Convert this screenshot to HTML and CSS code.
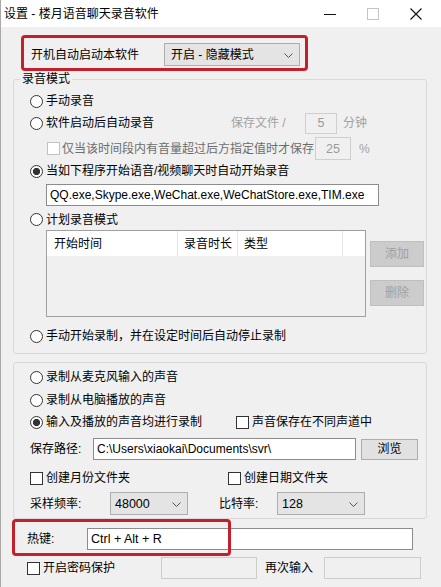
FILE: index.html
```html
<!DOCTYPE html>
<html lang="zh-CN">
<head>
<meta charset="utf-8">
<title>设置 - 楼月语音聊天录音软件</title>
<link rel="stylesheet" href="styles.css">
</head>
<body>
<div class="window">
  <div class="titlebar">
    <span class="title">设置 - 楼月语音聊天录音软件</span>
    <div class="caption">
      <span class="cap"><svg width="12" height="12" viewBox="0 0 12 12"><line x1="0" y1="6.5" x2="12" y2="6.5" stroke="#111" stroke-width="1"/></svg></span>
      <span class="cap"><svg width="12" height="12" viewBox="0 0 12 12"><rect x="0.5" y="0.5" width="11" height="11" fill="none" stroke="#c4c4c4" stroke-width="1"/></svg></span>
      <span class="cap"><svg width="12" height="12" viewBox="0 0 12 12"><path d="M0.5 0.5 L11.5 11.5 M11.5 0.5 L0.5 11.5" stroke="#111" stroke-width="1.1" fill="none"/></svg></span>
    </div>
  </div>

  <div class="content">
    <div class="startup-row">
      <span class="startup-label">开机自动启动本软件</span>
      <div class="combo combo-startup">
        <span>开启 - 隐藏模式</span>
        <svg class="chev" width="9" height="5" viewBox="0 0 9 5"><polyline points="0.5,0.5 4.5,4.5 8.5,0.5" fill="none" stroke="#555" stroke-width="1"/></svg>
      </div>
      <div class="mark mark-startup"></div>
    </div>

    <fieldset class="group group-mode">
      <legend>录音模式</legend>
      <div class="row r-h22 mt3"><span class="radio"></span><span>手动录音</span></div>
      <div class="row r-h22">
        <span class="radio"></span><span class="w185">软件启动后自动录音</span>
        <span class="dis w74">保存文件 /</span>
        <span class="spin spin-5">5</span>
        <span class="dis ml6">分钟</span>
      </div>
      <div class="row r-h23 mt3 indent-chk">
        <span class="chk chk-dis"></span><span class="semi">仅当该时间段内有音量超过后方指定值时才保存</span>
        <span class="spin spin-25">25</span>
        <span class="dis ml8">%</span>
      </div>
      <div class="row r-h22"><span class="radio on"></span><span>当如下程序开始语音/视频聊天时自动开始录音</span></div>
      <div class="field field-apps">QQ.exe,Skype.exe,WeChat.exe,WeChatStore.exe,TIM.exe</div>
      <div class="row r-h21 mt3"><span class="radio"></span><span>计划录音模式</span></div>
      <div class="plan">
        <div class="list">
          <div class="list-head">
            <span class="col col1">开始时间</span>
            <span class="col col2">录音时长</span>
            <span class="col col3">类型</span>
            <span class="col col4"></span>
          </div>
        </div>
        <div class="plan-buttons">
          <span class="btn btn-dis btn-add">添加</span>
          <span class="btn btn-dis btn-del">删除</span>
        </div>
      </div>
      <div class="row r-h22 mt8 mb6"><span class="radio"></span><span>手动开始录制，并在设定时间后自动停止录制</span></div>
    </fieldset>

    <fieldset class="group group-src">
      <div class="row r-h22 mt3"><span class="radio"></span><span>录制从麦克风输入的声音</span></div>
      <div class="row r-h22 mt1"><span class="radio"></span><span>录制从电脑播放的声音</span></div>
      <div class="row r-h22">
        <span class="radio on"></span><span class="w190">输入及播放的声音均进行录制</span>
        <span class="chk"></span><span>声音保存在不同声道中</span>
      </div>
      <div class="row r-h22 mt5">
        <span class="w63">保存路径:</span>
        <span class="field field-path">C:\Users\xiaokai\Documents\svr\</span>
        <span class="btn btn-browse">浏览</span>
      </div>
      <div class="row r-h22 mt7">
        <span class="chk"></span><span class="w182">创建月份文件夹</span>
        <span class="chk"></span><span>创建日期文件夹</span>
      </div>
      <div class="row r-h23 mt3 mb3">
        <span class="w80">采样频率:</span>
        <div class="combo combo-rate"><span>48000</span><svg class="chev" width="9" height="5" viewBox="0 0 9 5"><polyline points="0.5,0.5 4.5,4.5 8.5,0.5" fill="none" stroke="#555" stroke-width="1"/></svg></div>
        <span class="w58 ml31">比特率:</span>
        <div class="combo combo-bit"><span>128</span><svg class="chev" width="9" height="5" viewBox="0 0 9 5"><polyline points="0.5,0.5 4.5,4.5 8.5,0.5" fill="none" stroke="#555" stroke-width="1"/></svg></div>
      </div>
    </fieldset>

    <div class="row hotkey-row">
      <span class="w60">热键:</span>
      <span class="field field-hotkey">Ctrl + Alt + R</span>
      <div class="mark mark-hotkey"></div>
    </div>

    <div class="row pwd-row">
      <span class="chk"></span><span class="w118">开启密码保护</span>
      <span class="field field-dis field-pwd1"></span>
      <span class="w59 ml8">再次输入</span>
      <span class="field field-dis field-pwd2"></span>
    </div>
  </div>
</div>
</body>
</html>
```

FILE: styles.css
```css
* { box-sizing: border-box; }

html, body {
  margin: 0;
  padding: 0;
}

body {
  width: 441px;
  height: 587px;
  overflow: hidden;
  background: #f0f0f0;
  font-family: "Liberation Sans", "Noto Sans CJK SC", sans-serif;
  font-size: 12px;
  line-height: 16px;
  color: #000;
}

.window {
  width: 441px;
  height: 587px;
  border-left: 1px solid #a8a8a8;
  background: #f0f0f0;
}

/* title bar */
.titlebar {
  height: 27px;
  background: #fff;
  display: flex;
  align-items: center;
}
.title {
  padding-left: 3px;
  flex: 1;
  color: #000;
}
.caption {
  display: flex;
  margin-right: 4px;
}
.cap {
  width: 43px;
  height: 27px;
  display: flex;
  align-items: center;
  justify-content: center;
}

/* content */
.content {
  position: relative;
}

.startup-row {
  position: relative;
  display: flex;
  align-items: center;
  height: 23px;
  margin-top: 16px;
  padding-left: 30px;
}
.startup-label {
  width: 133px;
}

.combo {
  height: 23px;
  background: #e4e4e4;
  border: 1px solid #adadad;
  display: flex;
  align-items: center;
  justify-content: space-between;
  padding: 0 6px 0 6px;
}
.combo-startup { width: 136px; }
.combo-rate { width: 78px; padding-left: 4px; font-size: 12.5px; }
.combo-bit { width: 88px; padding-left: 4px; font-size: 12.5px; }
.chev { flex: none; margin-top: 1px; }

.mark {
  position: absolute;
  border: 3px solid #c3202b;
  border-radius: 4px;
  pointer-events: none;
}
.mark-startup {
  left: 20px;
  top: -8px;
  width: 287px;
  height: 36px;
}
.mark-hotkey {
  left: 11px;
  top: -9px;
  width: 219px;
  height: 37px;
}

/* groups */
.group {
  margin: 0 0 0 12px;
  width: 414px;
  padding: 0 0 0 16px;
  border: 1px solid #d9d9d9;
  border-radius: 3px;
  min-width: 0;
}
.group-mode { margin-top: 5px; }
.group-mode legend {
  margin-left: -10px;
  padding: 0 2px;
  line-height: 16px;
}
.group-src { margin-top: 8px; }

.row {
  display: flex;
  align-items: center;
  white-space: nowrap;
}
.r-h21 { height: 21px; }
.r-h22 { height: 22px; }
.r-h23 { height: 23px; }
.mt1 { margin-top: 1px; }
.mt3 { margin-top: 3px; }
.mt5 { margin-top: 5px; }
.mt7 { margin-top: 7px; }
.mt8 { margin-top: 8px; }
.mb3 { margin-bottom: 3px; }
.mb6 { margin-bottom: 6px; }
.ml6 { margin-left: 6px; }
.ml8 { margin-left: 8px; }
.ml31 { margin-left: 31px; }

.w58 { width: 58px; }
.w59 { width: 59px; }
.w60 { width: 60px; }
.w63 { width: 63px; }
.w74 { width: 74px; }
.w80 { width: 80px; }
.w118 { width: 118px; }
.w182 { width: 182px; }
.w185 { width: 185px; }
.w190 { width: 190px; }

.radio {
  flex: none;
  width: 13px;
  height: 13px;
  border: 1px solid #333;
  border-radius: 50%;
  background: #fff;
  margin-right: 3px;
}
.radio.on {
  background: radial-gradient(circle, #333 0 3.3px, #fff 3.9px);
}

.chk {
  flex: none;
  width: 13px;
  height: 13px;
  border: 1px solid #333;
  background: #fff;
  margin-right: 3px;
}
.chk-dis { border-color: #c2c2c2; background: #fff; margin-right: 2px; }
.indent-chk { padding-left: 17px; }

.dis { color: #a2a2a2; }
.semi { color: #6d6d6d; }

.spin {
  height: 22px;
  border: 1px solid #cfcfcf;
  background: #f0f0f0;
  color: #9a9a9a;
  display: flex;
  align-items: center;
  justify-content: center;
  font-size: 12.5px;
}
.spin-5 { width: 32px; height: 21px; }
.spin-25 { width: 36px; height: 23px; margin-left: 1px; }

.field {
  height: 22px;
  background: #fff;
  border: 1px solid #8c8c8c;
  display: flex;
  align-items: center;
  padding-left: 3px;
  white-space: nowrap;
  overflow: hidden;
  font-size: 12px;
}
.field-apps {
  margin: 2px 0 0 16px;
  width: 333px;
}
.field-path { width: 263px; }
.field-hotkey { width: 326px; font-size: 12.5px; }
.field-dis {
  background: #f0f0f0;
  border-color: #cccccc;
}
.field-pwd1 { width: 96px; }
.field-pwd2 { width: 97px; }

/* plan list */
.plan {
  display: flex;
  align-items: flex-start;
  padding-left: 16px;
}
.list {
  width: 320px;
  height: 87px;
  border: 1px solid #a0a0a0;
  background: #f0f0f0;
}
.list-head {
  display: flex;
  height: 25px;
  background: #fff;
}
.col {
  display: flex;
  align-items: center;
  border-right: 1px solid #e5e5e5;
  padding-left: 7px;
}
.col1 { width: 131px; }
.col2 { width: 60px; padding-left: 6px; }
.col3 { width: 105px; padding-left: 6px; }
.col4 { flex: 1; border-right: 0; }

.plan-buttons {
  display: flex;
  flex-direction: column;
  margin-left: 4px;
}
.btn {
  display: flex;
  align-items: center;
  justify-content: center;
  border: 1px solid #adadad;
  background: #e1e1e1;
}
.btn-dis {
  width: 54px;
  height: 26px;
  background: #cccccc;
  border-color: #bfbfbf;
  color: #a0a0a0;
}
.btn-add { margin-top: 11px; }
.btn-del { margin-top: 13px; }
.btn-browse {
  width: 57px;
  height: 21px;
  margin-left: 5px;
}

/* bottom rows */
.hotkey-row {
  position: relative;
  height: 22px;
  margin-top: 9px;
  padding-left: 26px;
}
.pwd-row {
  height: 22px;
  margin-top: 7px;
  padding-left: 26px;
}
```
